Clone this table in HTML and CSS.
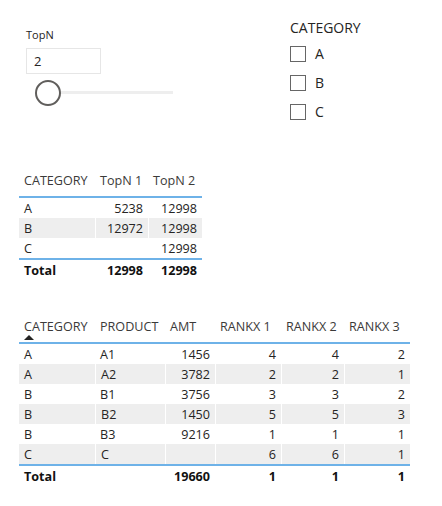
FILE: index.html
```html
<!DOCTYPE html>
<html>
<head>
<meta charset="utf-8">
<link rel="stylesheet" href="styles.css">
</head>
<body>
<div class="page">
  <div class="top">
    <div class="numslicer">
      <div class="label">TopN</div>
      <div class="input">2</div>
      <div class="slider">
        <div class="track"></div>
        <div class="thumb"></div>
      </div>
    </div>
    <div class="catslicer">
      <div class="cat-title">CATEGORY</div>
      <div class="opt"><span class="box"></span><span>A</span></div>
      <div class="opt"><span class="box"></span><span>B</span></div>
      <div class="opt"><span class="box"></span><span>C</span></div>
    </div>
  </div>

  <div class="table t1">
    <div class="row head">
      <div class="c">CATEGORY</div><div class="c">TopN 1</div><div class="c">TopN 2</div>
    </div>
    <div class="row"><div class="c">A</div><div class="c r">5238</div><div class="c r">12998</div></div>
    <div class="row alt"><div class="c">B</div><div class="c r">12972</div><div class="c r">12998</div></div>
    <div class="row"><div class="c">C</div><div class="c r"></div><div class="c r">12998</div></div>
    <div class="row total"><div class="c">Total</div><div class="c r">12998</div><div class="c r">12998</div></div>
  </div>

  <div class="table t2">
    <div class="row head">
      <div class="c">CATEGORY<span class="sort"></span></div><div class="c">PRODUCT</div><div class="c">AMT</div><div class="c">RANKX 1</div><div class="c">RANKX 2</div><div class="c">RANKX 3</div>
    </div>
    <div class="row"><div class="c">A</div><div class="c">A1</div><div class="c r">1456</div><div class="c r">4</div><div class="c r">4</div><div class="c r">2</div></div>
    <div class="row alt"><div class="c">A</div><div class="c">A2</div><div class="c r">3782</div><div class="c r">2</div><div class="c r">2</div><div class="c r">1</div></div>
    <div class="row"><div class="c">B</div><div class="c">B1</div><div class="c r">3756</div><div class="c r">3</div><div class="c r">3</div><div class="c r">2</div></div>
    <div class="row alt"><div class="c">B</div><div class="c">B2</div><div class="c r">1450</div><div class="c r">5</div><div class="c r">5</div><div class="c r">3</div></div>
    <div class="row"><div class="c">B</div><div class="c">B3</div><div class="c r">9216</div><div class="c r">1</div><div class="c r">1</div><div class="c r">1</div></div>
    <div class="row alt"><div class="c">C</div><div class="c">C</div><div class="c r"></div><div class="c r">6</div><div class="c r">6</div><div class="c r">1</div></div>
    <div class="row total"><div class="c">Total</div><div class="c"></div><div class="c r">19660</div><div class="c r">1</div><div class="c r">1</div><div class="c r">1</div></div>
  </div>
</div>
</body>
</html>
```

FILE: styles.css
```css
* { box-sizing: border-box; }
html, body { margin: 0; padding: 0; background: #fff; }
body {
  font-family: "Open Sans", "Noto Sans", sans-serif;
  color: #252423;
  width: 442px;
  height: 506px;
  overflow: hidden;
}
.page { padding: 0 0 0 19px; }

.top {
  display: flex;
  height: 165px;
}
.numslicer {
  width: 271px;
  padding: 28px 0 0 7px;
}
.label {
  font-size: 11px;
  line-height: 14px;
  color: #252423;
}
.input {
  margin-top: 6px;
  width: 75px;
  height: 26px;
  border: 1px solid #e6e6e6;
  font-size: 13px;
  line-height: 24px;
  padding-left: 7px;
  color: #252423;
}
.slider {
  position: relative;
  margin-top: 6px;
  width: 147px;
  height: 26px;
}
.track {
  position: absolute;
  left: 25px;
  right: 0;
  top: 11px;
  height: 3px;
  background: #eeeeee;
}
.thumb {
  position: absolute;
  left: 9px;
  top: 0;
  width: 26px;
  height: 26px;
  border-radius: 50%;
  border: 2px solid #605e5c;
  background: #fff;
}

.catslicer {
  padding-top: 19px;
}
.cat-title {
  font-size: 14px;
  line-height: 18px;
  color: #252423;
  margin-bottom: 8px;
}
.opt {
  display: flex;
  align-items: center;
  gap: 9px;
  height: 17px;
  margin-bottom: 12px;
  font-size: 14px;
  color: #252423;
}
.box {
  width: 16px;
  height: 16px;
  border: 1px solid #666;
  background: #fff;
}

.table { font-size: 12.6px; }
.row { display: grid; height: 20px; align-items: center; }
.t1 .row { grid-template-columns: 76px 53px 54px; width: 183px; }
.t2 .row { grid-template-columns: 76px 70px 50px 66px 63px 66px; width: 391px; }
.t2 { margin-top: 34px; }
.c {
  padding: 0 5px;
  white-space: nowrap;
  height: 100%;
  display: flex;
  align-items: center;
  color: #252423;
}
.c.r { justify-content: flex-end; }
.row.alt { background: #eeeeee; }
.row.alt .c + .c { border-left: 1px solid #fff; }
.head { border-bottom: 2px solid #6eb2e8; }
.head .c { color: #3b3a39; }
.t1 .head { height: 33px; }
.t2 .head { height: 30px; align-items: start; }
.t2 .head .c { position: relative; align-items: flex-start; padding-top: 4px; }
.sort {
  position: absolute;
  left: 5px;
  top: 21px;
  width: 0; height: 0;
  border-left: 5px solid transparent;
  border-right: 5px solid transparent;
  border-bottom: 5px solid #252423;
}
.total { border-top: 2px solid #6eb2e8; height: 22px; }
.total .c { font-weight: bold; color: #111; }
```
